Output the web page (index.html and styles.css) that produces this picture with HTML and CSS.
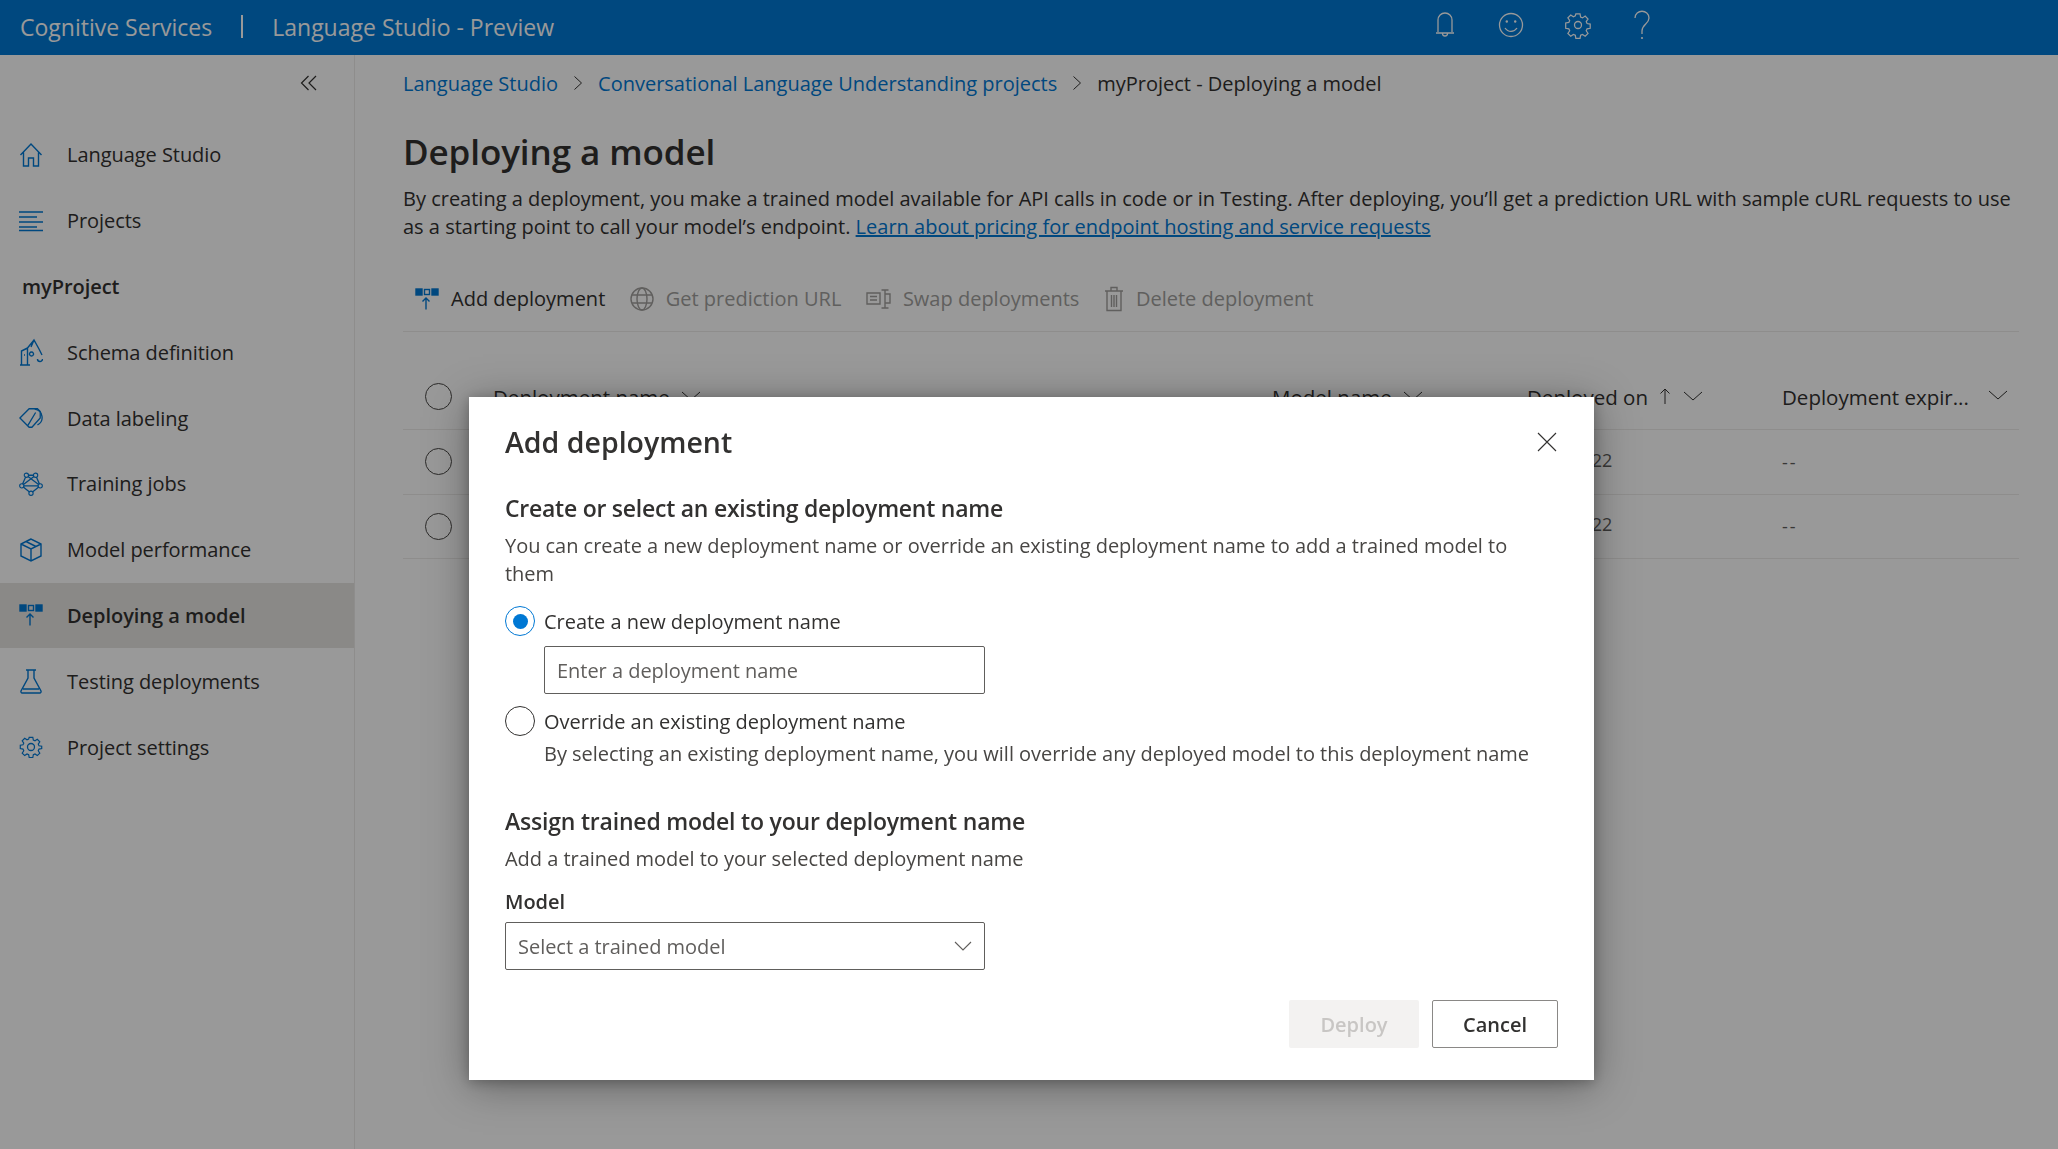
FILE: index.html
```html
<!DOCTYPE html>
<html lang="en">
<head>
  <meta charset="UTF-8" />
  <title>Language Studio - Preview</title>
  <link rel="stylesheet" href="styles.css">
</head>
<body>

<header class="topbar">
  <span class="brand">Cognitive Services</span>
  <span class="brand-sep"></span>
  <span class="brand-sub">Language Studio - Preview</span>
  <div class="top-icons">
    <svg width="24" height="30" viewBox="0 0 24 30"><path d="M5 22V10a7 7 0 0 1 14 0v12M3 23h18M9.500 23.500a2.500 2.500 0 0 0 5 0"/></svg>
    <svg width="26" height="30" viewBox="0 0 26 30"><circle cx="13" cy="15" r="11.500"/><circle class="dot" cx="8.800" cy="11.500" r="1.200"/><circle class="dot" cx="17.200" cy="11.500" r="1.200"/><path d="M7 18c3 4.500 9 4.500 12 0"/></svg>
    <svg width="26" height="30" viewBox="0 0 26 30"><circle cx="13" cy="15" r="3.500"/><path d="M10.800 3.500h4.400l.6 3.300 2 .9 2.800-1.900 3 3-1.900 2.800.9 2 3.300.6v4.400l-3.300.6-.9 2 1.900 2.800-3 3-2.800-1.900-2 .9-.6 3.300h-4.400l-.6-3.300-2-.9-2.800 1.900-3-3 1.900-2.800-.9-2-3.300-.6V13l3.300-.6.900-2-1.900-2.800 3-3 2.800 1.900 2-.9z" transform="translate(.6 .6) scale(.95)"/></svg>
    <svg width="20" height="32" viewBox="0 0 20 32"><path d="M3 9c0-9 14-9 14 0 0 6-7 6-7 13v3"/><circle class="dot" cx="10" cy="29" r="1.100"/></svg>
  </div>
</header>

<div class="layout">
  <nav class="sidebar">
    <div class="collapse">
      <svg width="18" height="16" viewBox="0 0 18 16"><path d="M8.500 1 1.500 8l7 7M16 1 9 8l7 7"/></svg>
    </div>
    <a class="nav-item">
      <svg width="24" height="26" viewBox="0 0 24 26"><path d="M1.500 13 12 2l10.500 11M4.500 10.500V24h5v-8h5v8h5V10.500"/></svg>
      Language Studio
    </a>
    <a class="nav-item">
      <svg width="24" height="26" viewBox="0 0 24 26"><path d="M0 4h24M0 9h18M0 14h24M0 19h18M0 22.500h24"/></svg>
      Projects
    </a>
    <div class="nav-title">myProject</div>
    <a class="nav-item">
      <svg width="24" height="28" viewBox="0 0 24 28"><path d="M1 27h10M2.500 27V13l6-3v17M5 17h1M8.500 10 15 2l5 9M15 2l-3 7M12.500 14a2 2 0 1 0 .01 0M20 11l3 6M18.500 21a2.500 2.500 0 1 0 5 0"/></svg>
      Schema definition
    </a>
    <a class="nav-item">
      <svg width="26" height="24" viewBox="0 0 26 24"><path d="M1 12 11 2h9l3 3v7l-9 10h-3zM9 21l9-15"/><path d="M17 2.500a9 9 0 0 1 3 17"/></svg>
      Data labeling
    </a>
    <a class="nav-item">
      <svg width="26" height="26" viewBox="0 0 26 26"><path d="M8 3.500 3 15l10 8 10-8-5-11.500zM8 3.500 23 15M18 3.500 3 15M3 15h20"/><circle class="node" cx="8" cy="3.500" r="2.300"/><circle class="node" cx="18" cy="3.500" r="2.300"/><circle class="node" cx="3" cy="15" r="2.300"/><circle class="node" cx="23" cy="15" r="2.300"/><circle class="node" cx="13" cy="23" r="2.300"/></svg>
      Training jobs
    </a>
    <a class="nav-item">
      <svg width="24" height="26" viewBox="0 0 24 26"><path d="M12 2 2 7v12l10 5 10-5V7zM2 7l10 5 10-5M12 12v12M7 4.500l10 5"/></svg>
      Model performance
    </a>
    <a class="nav-item active">
      <svg class="deploy-icon" width="24" height="22" viewBox="0 0 24 22"><rect class="fill" x="1" y="1" width="6" height="6"/><rect x="9.500" y="1.500" width="5" height="5"/><rect class="fill" x="17" y="1" width="6" height="6"/><path d="M11 21.500V10M7.500 13.500 11 10l3.500 3.500"/></svg>
      Deploying a model
    </a>
    <a class="nav-item">
      <svg width="24" height="26" viewBox="0 0 24 26"><path d="M7 2h10M9 2v8L2 23a1.500 1.500 0 0 0 1 2h18a1.500 1.500 0 0 0 1-2L15 10V2M4 21h16"/></svg>
      Testing deployments
    </a>
    <a class="nav-item">
      <svg width="26" height="26" viewBox="0 0 26 26"><circle cx="13" cy="13" r="3.800"/><path d="M10.800 1.500h4.400l.6 3.300 2 .9 2.800-1.900 3 3-1.900 2.800.9 2 3.300.6V15l-3.300.6-.9 2 1.900 2.800-3 3-2.800-1.900-2 .9-.6 3.300h-4.400l-.6-3.300-2-.9-2.800 1.900-3-3 1.900-2.800-.9-2-3.300-.6V11l3.300-.6.900-2-1.900-2.800 3-3 2.800 1.900 2-.9z" transform="translate(1.300 1.200) scale(.9)"/></svg>
      Project settings
    </a>
  </nav>

  <main class="main">
    <div class="breadcrumb">
      <a>Language Studio</a>
      <svg width="10" height="16" viewBox="0 0 10 16"><path d="m1.500 1.500 7 6.500-7 6.500"/></svg>
      <a>Conversational Language Understanding projects</a>
      <svg width="10" height="16" viewBox="0 0 10 16"><path d="m1.500 1.500 7 6.500-7 6.500"/></svg>
      <span>myProject - Deploying a model</span>
    </div>

    <h1>Deploying a model</h1>
    <p class="intro">By creating a deployment, you make a trained model available for API calls in code or in Testing. After deploying, you’ll get a prediction URL with sample cURL requests to use as a starting point to call your model’s endpoint. <a>Learn about pricing for endpoint hosting and service requests</a></p>

    <div class="toolbar">
      <button class="tool">
        <svg class="deploy-icon" width="24" height="22" viewBox="0 0 24 22"><rect class="fill" x="1" y="1" width="6" height="6"/><rect x="9.500" y="1.500" width="5" height="5"/><rect class="fill" x="17" y="1" width="6" height="6"/><path d="M11 21.500V10M7.500 13.500 11 10l3.500 3.500"/></svg>
        Add deployment
      </button>
      <button class="tool off">
        <svg width="24" height="24" viewBox="0 0 24 24"><circle cx="12" cy="12" r="11"/><ellipse cx="12" cy="12" rx="5" ry="11"/><path d="M2 8h20M2 16h20"/></svg>
        Get prediction URL
      </button>
      <button class="tool off">
        <svg width="25" height="24" viewBox="0 0 25 24"><path d="M1 6h13v11H1zM4 9.500h7M4 13h7M19 3v18M15.500 3h7M15.500 21h7M19 7h5v9h-5"/></svg>
        Swap deployments
      </button>
      <button class="tool off">
        <svg width="20" height="26" viewBox="0 0 20 26"><path d="M1 5h18M7 5V1.500h6V5M3 5v19.500h14V5M7.500 9v12M10 9v12M12.500 9v12"/></svg>
        Delete deployment
      </button>
    </div>

    <div class="table">
      <div class="row head">
        <span class="check"></span>
        <span class="cell name">Deployment name <svg class="chev" width="20" height="10" viewBox="0 0 20 10"><path d="m1 1 9 8 9-8"/></svg></span>
        <span class="cell model">Model name <svg class="chev" width="20" height="10" viewBox="0 0 20 10"><path d="m1 1 9 8 9-8"/></svg></span>
        <span class="cell date">Deployed on
          <svg width="12" height="18" viewBox="0 0 12 18"><path d="M6 17V2M1.500 6.500 6 2l4.500 4.500"/></svg>
          <svg class="chev" width="20" height="10" viewBox="0 0 20 10"><path d="m1 1 9 8 9-8"/></svg>
        </span>
        <span class="cell expiry">Deployment expir...</span>
        <svg class="expiry-chevron" width="20" height="10" viewBox="0 0 20 10"><path d="m1 1 9 8 9-8"/></svg>
      </div>
      <div class="row">
        <span class="check"></span>
        <span class="cell name"></span>
        <span class="cell model"></span>
        <span class="cell date light">12/1/2022</span>
        <span class="cell expiry light dash">--</span>
      </div>
      <div class="row">
        <span class="check"></span>
        <span class="cell name"></span>
        <span class="cell model"></span>
        <span class="cell date light">12/1/2022</span>
        <span class="cell expiry light dash">--</span>
      </div>
    </div>
  </main>
</div>

<div class="overlay"></div>

<section class="dialog">
  <div class="dialog-head">
    <h2>Add deployment</h2>
    <svg width="20" height="20" viewBox="0 0 20 20"><path d="m1 1 18 18M19 1 1 19"/></svg>
  </div>

  <h3>Create or select an existing deployment name</h3>
  <p class="text">You can create a new deployment name or override an existing deployment name to add a trained model to them</p>

  <div class="radio-row first">
    <span class="radio on"></span>
    <span>Create a new deployment name</span>
  </div>
  <div class="field name-input">Enter a deployment name</div>
  <div class="radio-row">
    <span class="radio"></span>
    <span>Override an existing deployment name</span>
  </div>
  <p class="text hint">By selecting an existing deployment name, you will override any deployed model to this deployment name</p>

  <h3 class="second">Assign trained model to your deployment name</h3>
  <p class="text">Add a trained model to your selected deployment name</p>

  <label class="label">Model</label>
  <div class="field select">
    <span>Select a trained model</span>
    <svg width="18" height="11" viewBox="0 0 18 11"><path d="m1 1 8 8 8-8"/></svg>
  </div>

  <div class="actions">
    <button class="btn disabled">Deploy</button>
    <button class="btn">Cancel</button>
  </div>
</section>

</body>
</html>
```
FILE: styles.css
```css
* {
  box-sizing: border-box;
}

body {
  margin: 0;
  height: 100vh;
  overflow: hidden;
  font-family: "Open Sans", "Noto Sans", sans-serif;
  font-size: 20px;
  color: #323130;
  background: white;
}

svg {
  fill: none;
  stroke: currentColor;
  stroke-width: 1.4;
  flex-shrink: 0;
}

a {
  color: #0078d4;
}

.topbar {
  height: 55px;
  background: #0078d4;
  color: white;
  display: flex;
  align-items: center;
  padding: 0 0 2px 20px;
  font-size: 23px;
}

.brand-sep {
  width: 2px;
  height: 23px;
  background: white;
  margin: 0 29px;
}

.top-icons {
  position: absolute;
  left: 1433px;
  top: 0;
  display: flex;
  align-items: center;
  gap: 41px;
  height: 49px;
}

.top-icons svg {
  stroke-width: 1.3;
}

.top-icons svg .dot {
  fill: currentColor;
  stroke: none;
}

.layout {
  display: flex;
  height: calc(100vh - 55px);
}

.sidebar {
  width: 355px;
  border-right: 1px solid #edebe9;
  flex-shrink: 0;
}

.collapse {
  height: 67px;
  display: flex;
  justify-content: flex-end;
  align-items: flex-start;
  padding: 20px 36px 0 0;
}

.collapse svg {
  stroke-width: 1.2;
}

.nav-item, .nav-title {
  height: 65.8px;
  display: flex;
  align-items: center;
  color: #323130;
  letter-spacing: -0.05px;
}

.nav-item {
  padding-left: 19px;
  gap: 24px;
}

.nav-item svg {
  color: #0078d4;
  width: 24px;
}

.nav-item svg .node {
  fill: white;
  stroke-width: 1.2;
}

.nav-title {
  padding-left: 22px;
  font-weight: 600;
}

.nav-item.active {
  background: #e6e4e2;
  font-weight: 600;
}

.deploy-icon {
  color: #0078d4;
}

.deploy-icon .fill {
  fill: currentColor;
}

.main {
  flex: 1;
  padding: 0 39px 0 48px;
}

.breadcrumb {
  height: 56px;
  display: flex;
  align-items: center;
  gap: 15px;
}

.breadcrumb svg {
  stroke-width: 1;
}

h1 {
  margin: 17px 0 0;
  font-size: 35px;
  line-height: 48px;
  font-weight: 600;
  letter-spacing: -0.1px;
}

.intro {
  margin: 9px 0 0;
  line-height: 28px;
}

.intro a {
  text-decoration: underline;
}

.toolbar {
  margin-top: 36px;
  height: 55px;
  padding: 0 12px 11px;
  display: flex;
  align-items: center;
  gap: 24.500px;
  border-bottom: 1px solid #edebe9;
}

.tool {
  display: flex;
  align-items: center;
  gap: 12px;
  border: none;
  background: none;
  padding: 0;
  font: inherit;
  color: #323130;
}

.tool.off {
  color: #a19f9d;
}

.table {
  margin-top: 32px;
}

.row {
  display: grid;
  grid-template-columns: 90px 779px 255px 255px 1fr;
  align-items: center;
  height: 64.5px;
  border-bottom: 1px solid #edebe9;
  position: relative;
}

.row.head {
  height: 66px;
  font-size: 20.5px;
  font-weight: 500;
}

.check {
  width: 27px;
  height: 27px;
  margin-left: 22px;
  border: 1.5px solid #484644;
  border-radius: 50%;
}

.cell svg {
  margin-left: 6px;
  stroke-width: 1;
}

.cell .chev {
  vertical-align: 4px;
}

.light {
  font-size: 18px;
  color: #605e5c;
  margin-bottom: 4px;
}

.light.dash {
  margin-bottom: 0;
  letter-spacing: 2px;
}

.expiry-chevron {
  position: absolute;
  right: 11px;
  top: 26px;
  stroke-width: 1;
}

.overlay {
  position: fixed;
  inset: 0;
  background: rgba(0, 0, 0, 0.4);
}

.dialog {
  position: absolute;
  left: 469px;
  top: 397px;
  width: 1125px;
  height: 683px;
  padding: 0 36px;
  background: white;
  box-shadow: 0 6px 40px rgba(0, 0, 0, 0.35), 0 2px 12px rgba(0, 0, 0, 0.25);
  letter-spacing: -0.03px;
}

.dialog svg {
  stroke-width: 1.1;
}

.dialog-head {
  height: 90px;
  display: flex;
  align-items: center;
  justify-content: space-between;
  padding-right: 1px;
}

h2 {
  margin: 0;
  font-size: 28.500px;
  font-weight: 600;
  letter-spacing: 0;
}

h3 {
  margin: 0;
  font-size: 23px;
  line-height: 42px;
  font-weight: 600;
  letter-spacing: -0.25px;
}

h3.second {
  margin-top: 32px;
  letter-spacing: -0.2px;
}

.text {
  margin: 3px 0 0;
  max-width: 1040px;
  line-height: 28px;
  color: #484644;
}

.hint {
  margin-left: 39px;
  margin-top: 4px;
}

.radio-row {
  display: flex;
  align-items: center;
  gap: 9px;
  height: 30px;
  color: #323130;
}

.radio-row.first {
  margin-top: 18px;
}

.radio {
  width: 30px;
  height: 30px;
  border: 1.5px solid #323130;
  border-radius: 50%;
  display: flex;
  align-items: center;
  justify-content: center;
}

.radio.on {
  border-color: #0078d4;
}

.radio.on::after {
  content: "";
  width: 15px;
  height: 15px;
  border-radius: 50%;
  background: #0078d4;
}

.field {
  height: 48px;
  border: 1.5px solid #605e5c;
  border-radius: 2px;
  display: flex;
  align-items: center;
  padding: 0 12px;
  color: #605e5c;
}

.name-input {
  width: 441px;
  margin: 10px 0 12px 39px;
}

.label {
  display: block;
  margin-top: 15px;
  line-height: 28px;
  font-weight: 600;
}

.select {
  width: 480px;
  margin-top: 6px;
  justify-content: space-between;
}

.actions {
  display: flex;
  justify-content: flex-end;
  gap: 13px;
  margin-top: 30px;
}

.btn {
  width: 126px;
  height: 48px;
  border: 1.5px solid #8a8886;
  border-radius: 2px;
  background: white;
  font: inherit;
  font-weight: 600;
  color: #323130;
}

.btn.disabled {
  width: 130px;
  border: none;
  background: #f3f2f1;
  color: #c8c6c4;
}
```
